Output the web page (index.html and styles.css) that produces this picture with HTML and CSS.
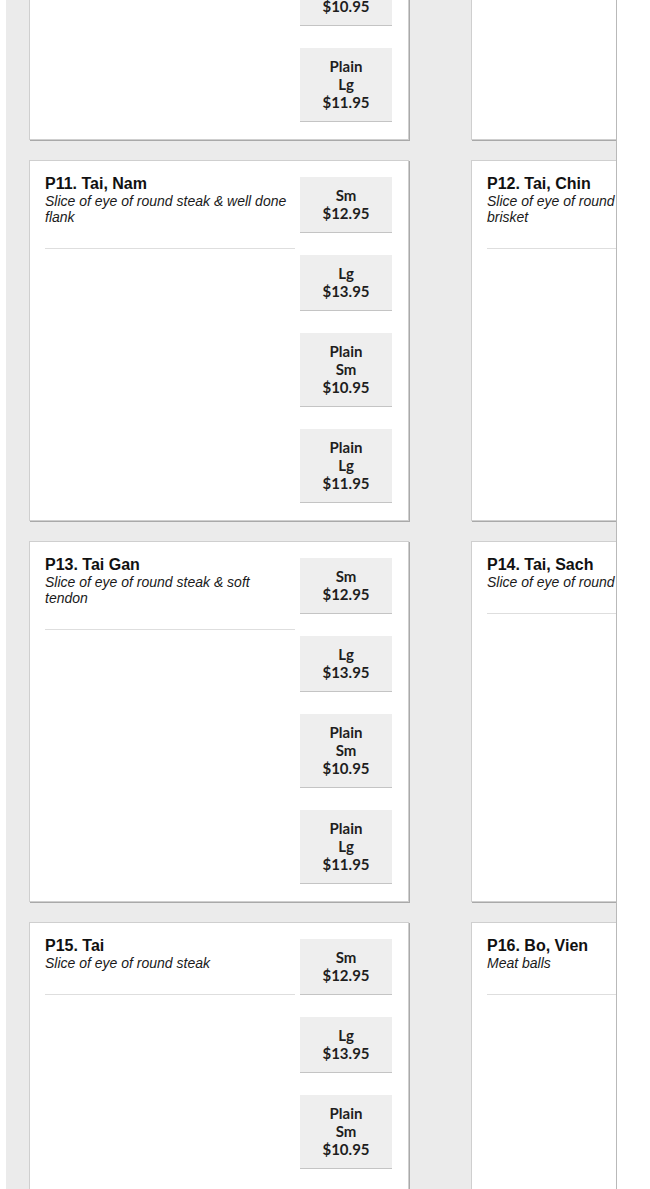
FILE: index.html
```html
<!DOCTYPE html>
<html lang="en">
<head>
<meta charset="utf-8">
<title>Pho Menu</title>
<link rel="stylesheet" href="styles.css">
</head>
<body>
<div class="page">
  <div class="menu">
    <div class="card">
      <div class="info">
        <h3 class="name">P9. Tai, Gau</h3>
        <p class="desc">Slice of eye of round steak &amp; fatty brisket</p>
      </div>
      <div class="prices">
        <div class="price">Sm<br>$12.95</div>
        <div class="price">Lg<br>$13.95</div>
        <div class="price">Plain<br>Sm<br>$10.95</div>
        <div class="price">Plain<br>Lg<br>$11.95</div>
      </div>
    </div>
    <div class="card">
      <div class="info">
        <h3 class="name">P10. Tai, Gau</h3>
        <p class="desc">Slice of eye of round steak &amp; fat</p>
      </div>
      <div class="prices">
        <div class="price">Sm<br>$12.95</div>
        <div class="price">Lg<br>$13.95</div>
        <div class="price">Plain<br>Sm<br>$10.95</div>
        <div class="price">Plain<br>Lg<br>$11.95</div>
      </div>
    </div>

    <div class="card">
      <div class="info">
        <h3 class="name">P11. Tai, Nam</h3>
        <p class="desc">Slice of eye of round steak &amp; well done flank</p>
      </div>
      <div class="prices">
        <div class="price">Sm<br>$12.95</div>
        <div class="price">Lg<br>$13.95</div>
        <div class="price">Plain<br>Sm<br>$10.95</div>
        <div class="price">Plain<br>Lg<br>$11.95</div>
      </div>
    </div>
    <div class="card">
      <div class="info">
        <h3 class="name">P12. Tai, Chin</h3>
        <p class="desc">Slice of eye of round steak &amp; well done brisket</p>
      </div>
      <div class="prices">
        <div class="price">Sm<br>$12.95</div>
        <div class="price">Lg<br>$13.95</div>
        <div class="price">Plain<br>Sm<br>$10.95</div>
        <div class="price">Plain<br>Lg<br>$11.95</div>
      </div>
    </div>

    <div class="card">
      <div class="info">
        <h3 class="name">P13. Tai Gan</h3>
        <p class="desc">Slice of eye of round steak &amp; soft tendon</p>
      </div>
      <div class="prices">
        <div class="price">Sm<br>$12.95</div>
        <div class="price">Lg<br>$13.95</div>
        <div class="price">Plain<br>Sm<br>$10.95</div>
        <div class="price">Plain<br>Lg<br>$11.95</div>
      </div>
    </div>
    <div class="card">
      <div class="info">
        <h3 class="name">P14. Tai, Sach</h3>
        <p class="desc">Slice of eye of round steak &amp; tripe</p>
      </div>
      <div class="prices">
        <div class="price">Sm<br>$12.95</div>
        <div class="price">Lg<br>$13.95</div>
        <div class="price">Plain<br>Sm<br>$10.95</div>
        <div class="price">Plain<br>Lg<br>$11.95</div>
      </div>
    </div>

    <div class="card">
      <div class="info">
        <h3 class="name">P15. Tai</h3>
        <p class="desc">Slice of eye of round steak</p>
      </div>
      <div class="prices">
        <div class="price">Sm<br>$12.95</div>
        <div class="price">Lg<br>$13.95</div>
        <div class="price">Plain<br>Sm<br>$10.95</div>
        <div class="price">Plain<br>Lg<br>$11.95</div>
      </div>
    </div>
    <div class="card">
      <div class="info">
        <h3 class="name">P16. Bo, Vien</h3>
        <p class="desc">Meat balls</p>
      </div>
      <div class="prices">
        <div class="price">Sm<br>$12.95</div>
        <div class="price">Lg<br>$13.95</div>
        <div class="price">Plain<br>Sm<br>$10.95</div>
        <div class="price">Plain<br>Lg<br>$11.95</div>
      </div>
    </div>
  </div>
</div>
</body>
</html>
```

FILE: styles.css
```css
html, body {
  margin: 0;
  padding: 0;
  background: #ffffff;
}

body {
  font-family: "Liberation Sans", Arial, sans-serif;
  color: #111;
}

.page {
  margin-left: 6px;
  width: 610px;
  background: #ebebeb;
  border-right: 1px solid #b9b9b9;
  overflow: hidden;
}

.menu {
  display: grid;
  grid-template-columns: 380px 380px;
  column-gap: 62px;
  row-gap: 20px;
  padding-left: 23px;
  margin-top: -221px;
  padding-bottom: 20px;
}

.card {
  display: flex;
  align-items: flex-start;
  gap: 5px;
  background: #ffffff;
  border: 1px solid #cfcfcf;
  box-shadow: 1px 1px 0 #a9a9a9;
  padding: 14px 16px 17px 15px;
  box-sizing: border-box;
  width: 380px;
}

.info {
  width: 250px;
  flex: none;
  padding-bottom: 23px;
  border-bottom: 1px solid #dedede;
}

.name {
  margin: 0;
  font-size: 16px;
  font-weight: 700;
  line-height: normal;
  color: #111;
}

.desc {
  margin: 0;
  font-size: 14px;
  font-style: italic;
  line-height: normal;
  color: #1a1a1a;
}

.prices {
  width: 92px;
  flex: none;
  padding-top: 2px;
  display: flex;
  flex-direction: column;
  gap: 22px;
}

.price {
  background: #eeeeee;
  border-bottom: 1px solid #c4c4c4;
  padding: 9px 4px 10px;
  font-family: Lato, "Noto Sans", sans-serif;
  font-weight: 700;
  font-size: 15px;
  line-height: 18px;
  text-align: center;
  color: #1e1e1e;
}
```
